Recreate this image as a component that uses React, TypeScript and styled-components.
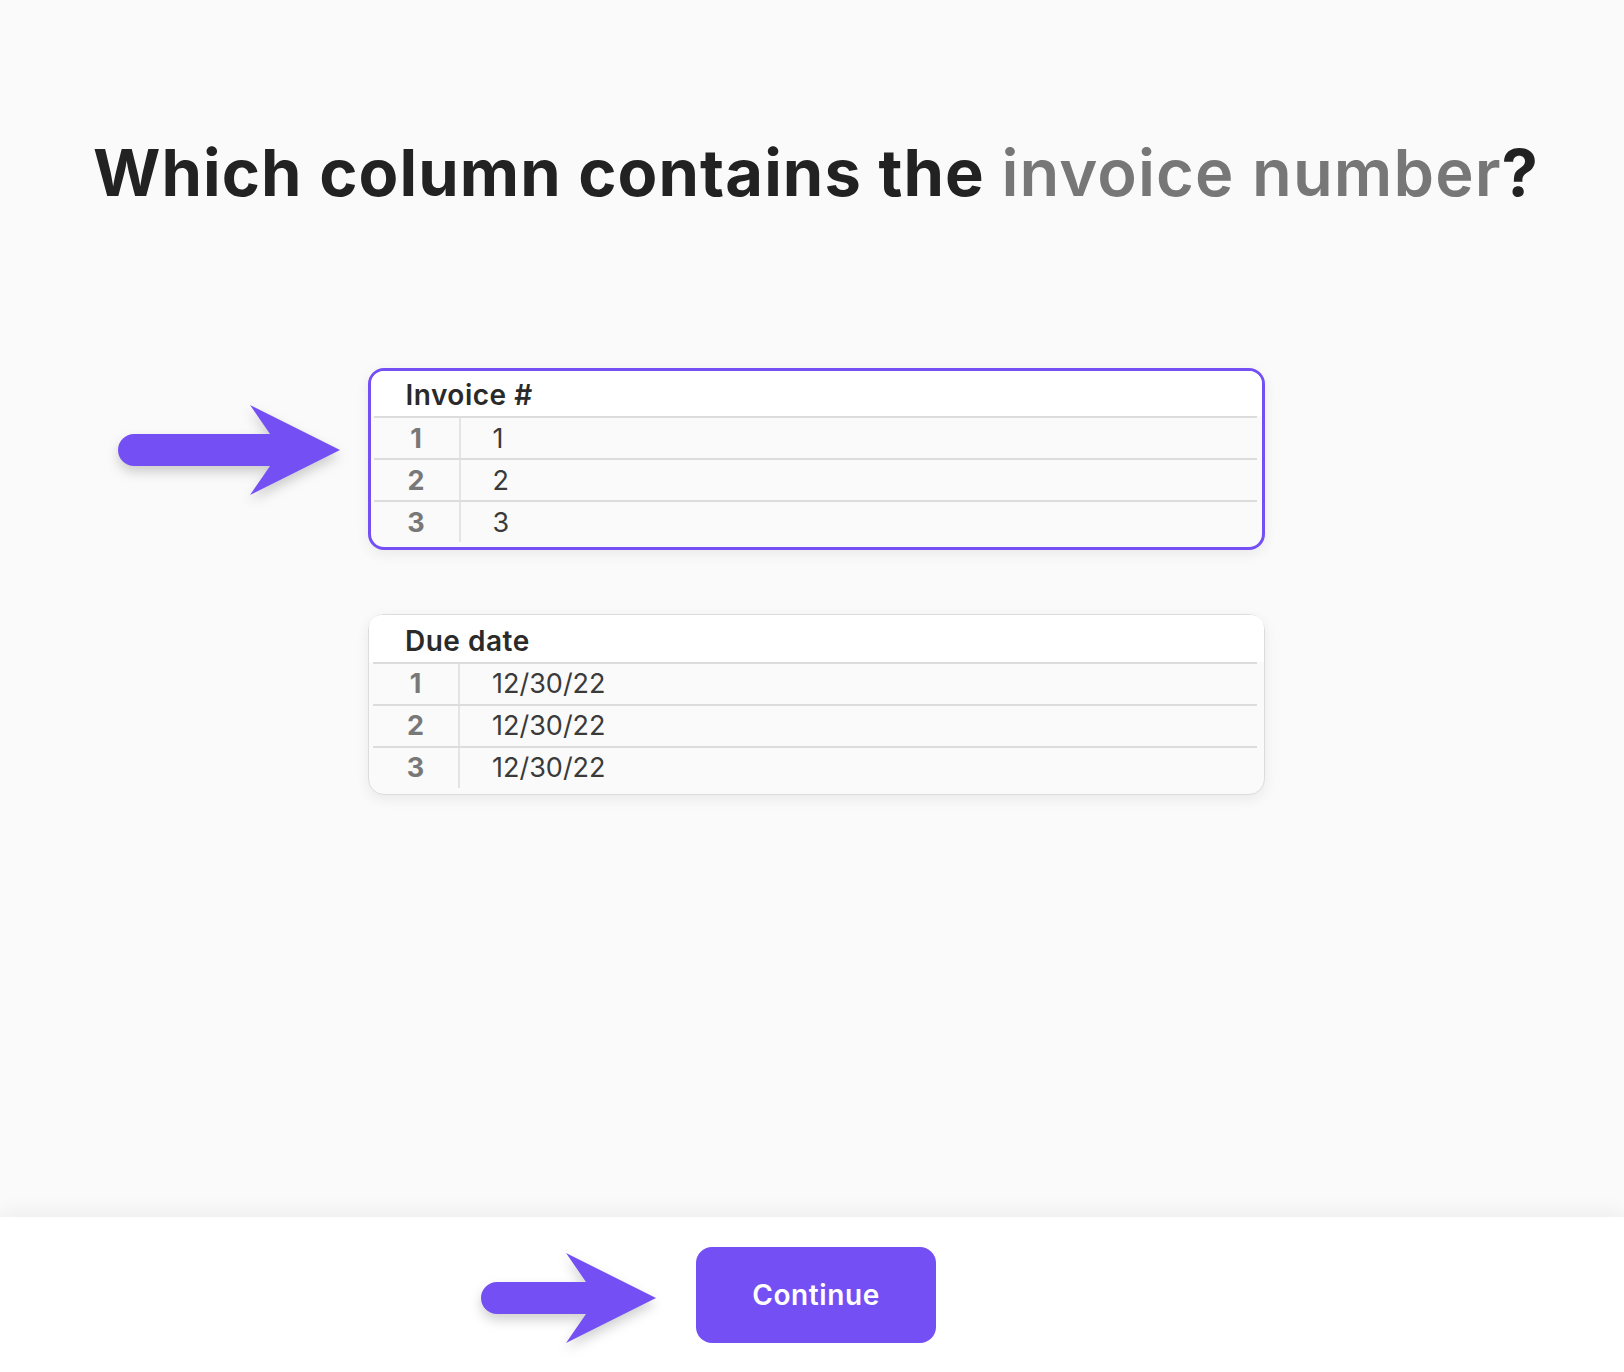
import React from "react";
import styled, { createGlobalStyle } from "styled-components";

const purple = "#7450f4";

const GlobalStyle = createGlobalStyle`
  html, body {
    margin: 0;
    padding: 0;
    background: #fafafa;
    font-family: Inter, "Open Sans", sans-serif;
  }
`;

const Page = styled.div`
  min-height: 100vh;
  display: flex;
  flex-direction: column;
  padding-left: 8px;
  box-sizing: border-box;
`;

const Main = styled.main`
  flex: 1;
  display: flex;
  flex-direction: column;
  align-items: center;
  padding-top: 134px;
`;

const Title = styled.h1`
  margin: 0;
  font-size: 65px;
  line-height: 1.2;
  font-weight: 700;
  letter-spacing: 1.1px;
  color: #222;
  white-space: nowrap;
`;

const Muted = styled.span`
  color: #777;
  font-weight: 600;
`;

const Columns = styled.div`
  margin-top: 156px;
  width: 897px;
  display: flex;
  flex-direction: column;
  gap: 64px;
`;

// the inner table sits 6px from the outer edge on the left, 8px on the right
const Card = styled.div<{ $selected?: boolean }>`
  --bw: ${(p) => (p.$selected ? "3px" : "1.5px")};
  --pl: calc(6px - var(--bw));
  --pr: calc(8px - var(--bw));
  position: relative;
  background: #fafafa;
  border-radius: 16px;
  border: var(--bw) solid ${(p) => (p.$selected ? purple : "#dcdcdc")};
  padding: 0 var(--pr) calc(var(--pl) + 2px) var(--pl);
  box-shadow: 0 4px 14px rgba(0, 0, 0, 0.07);
`;

const HeaderRow = styled.div`
  height: 42px;
  display: flex;
  align-items: center;
  margin: 0 calc(0px - var(--pr)) 0 calc(0px - var(--pl));
  padding: var(--pl) 0 0 calc(32px + var(--pl));
  background: #fff;
  border-radius: 13px 13px 0 0;
  font-size: 28px;
  font-weight: 600;
  letter-spacing: 0.5px;
  color: #2a2a2a;
`;

const Row = styled.div`
  display: grid;
  grid-template-columns: 87px 1fr;
  height: 40px;
  border-top: 2px solid #dcdcdc;
  font-size: 27px;
`;

const Index = styled.div`
  display: flex;
  align-items: center;
  justify-content: center;
  border-right: 2px solid #e4e4e4;
  color: #787878;
  font-weight: 700;
`;

const Value = styled.div`
  display: flex;
  align-items: center;
  padding-left: 32px;
  color: #3a3a3a;
  font-weight: 400;
`;

const Footer = styled.footer`
  height: 155px;
  margin-left: -8px;
  padding-left: 8px;
  background: #fff;
  box-shadow: 0 -6px 18px rgba(0, 0, 0, 0.05);
  display: flex;
  align-items: center;
  justify-content: center;
`;

const ButtonWrap = styled.div`
  position: relative;
`;

const ContinueButton = styled.button`
  width: 240px;
  height: 96px;
  border: none;
  border-radius: 16px;
  background: ${purple};
  color: #fff;
  font-family: inherit;
  font-size: 28px;
  font-weight: 600;
  letter-spacing: 0.6px;
  cursor: pointer;
`;

const Pointer = styled.svg<{ $gap: number; $top: number }>`
  position: absolute;
  right: calc(100% + ${(p) => p.$gap}px);
  top: ${(p) => p.$top}px;
  filter: drop-shadow(0 6px 6px rgba(0, 0, 0, 0.18));
  overflow: visible;
`;

const Arrow = ({ length, gap, top }: { length: number; gap: number; top: number }) => {
  const notch = length - 70;
  const back = length - 90;
  return (
    <Pointer $gap={gap} $top={top} width={length} height={90} viewBox={`0 0 ${length} 90`}>
      <path
        d={`M16 29 H${notch} L${back} 0 L${length} 45 L${back} 90 L${notch} 61 H16 A16 16 0 0 1 16 29 Z`}
        fill={purple}
      />
    </Pointer>
  );
};

type Column = { title: string; values: string[]; selected?: boolean };

const columns: Column[] = [
  { title: "Invoice #", values: ["1", "2", "3"], selected: true },
  { title: "Due date", values: ["12/30/22", "12/30/22", "12/30/22"] },
];

export default function App() {
  return (
    <>
      <GlobalStyle />
      <Page>
        <Main>
          <Title>
            Which column contains the <Muted>invoice number</Muted>?
          </Title>
          <Columns>
            {columns.map((col) => (
              <Card key={col.title} $selected={col.selected}>
                {col.selected && <Arrow length={222} gap={31} top={34} />}
                <HeaderRow>{col.title}</HeaderRow>
                {col.values.map((v, i) => (
                  <Row key={i}>
                    <Index>{i + 1}</Index>
                    <Value>{v}</Value>
                  </Row>
                ))}
              </Card>
            ))}
          </Columns>
        </Main>
        <Footer>
          <ButtonWrap>
            <Arrow length={175} gap={40} top={6} />
            <ContinueButton>Continue</ContinueButton>
          </ButtonWrap>
        </Footer>
      </Page>
    </>
  );
}
